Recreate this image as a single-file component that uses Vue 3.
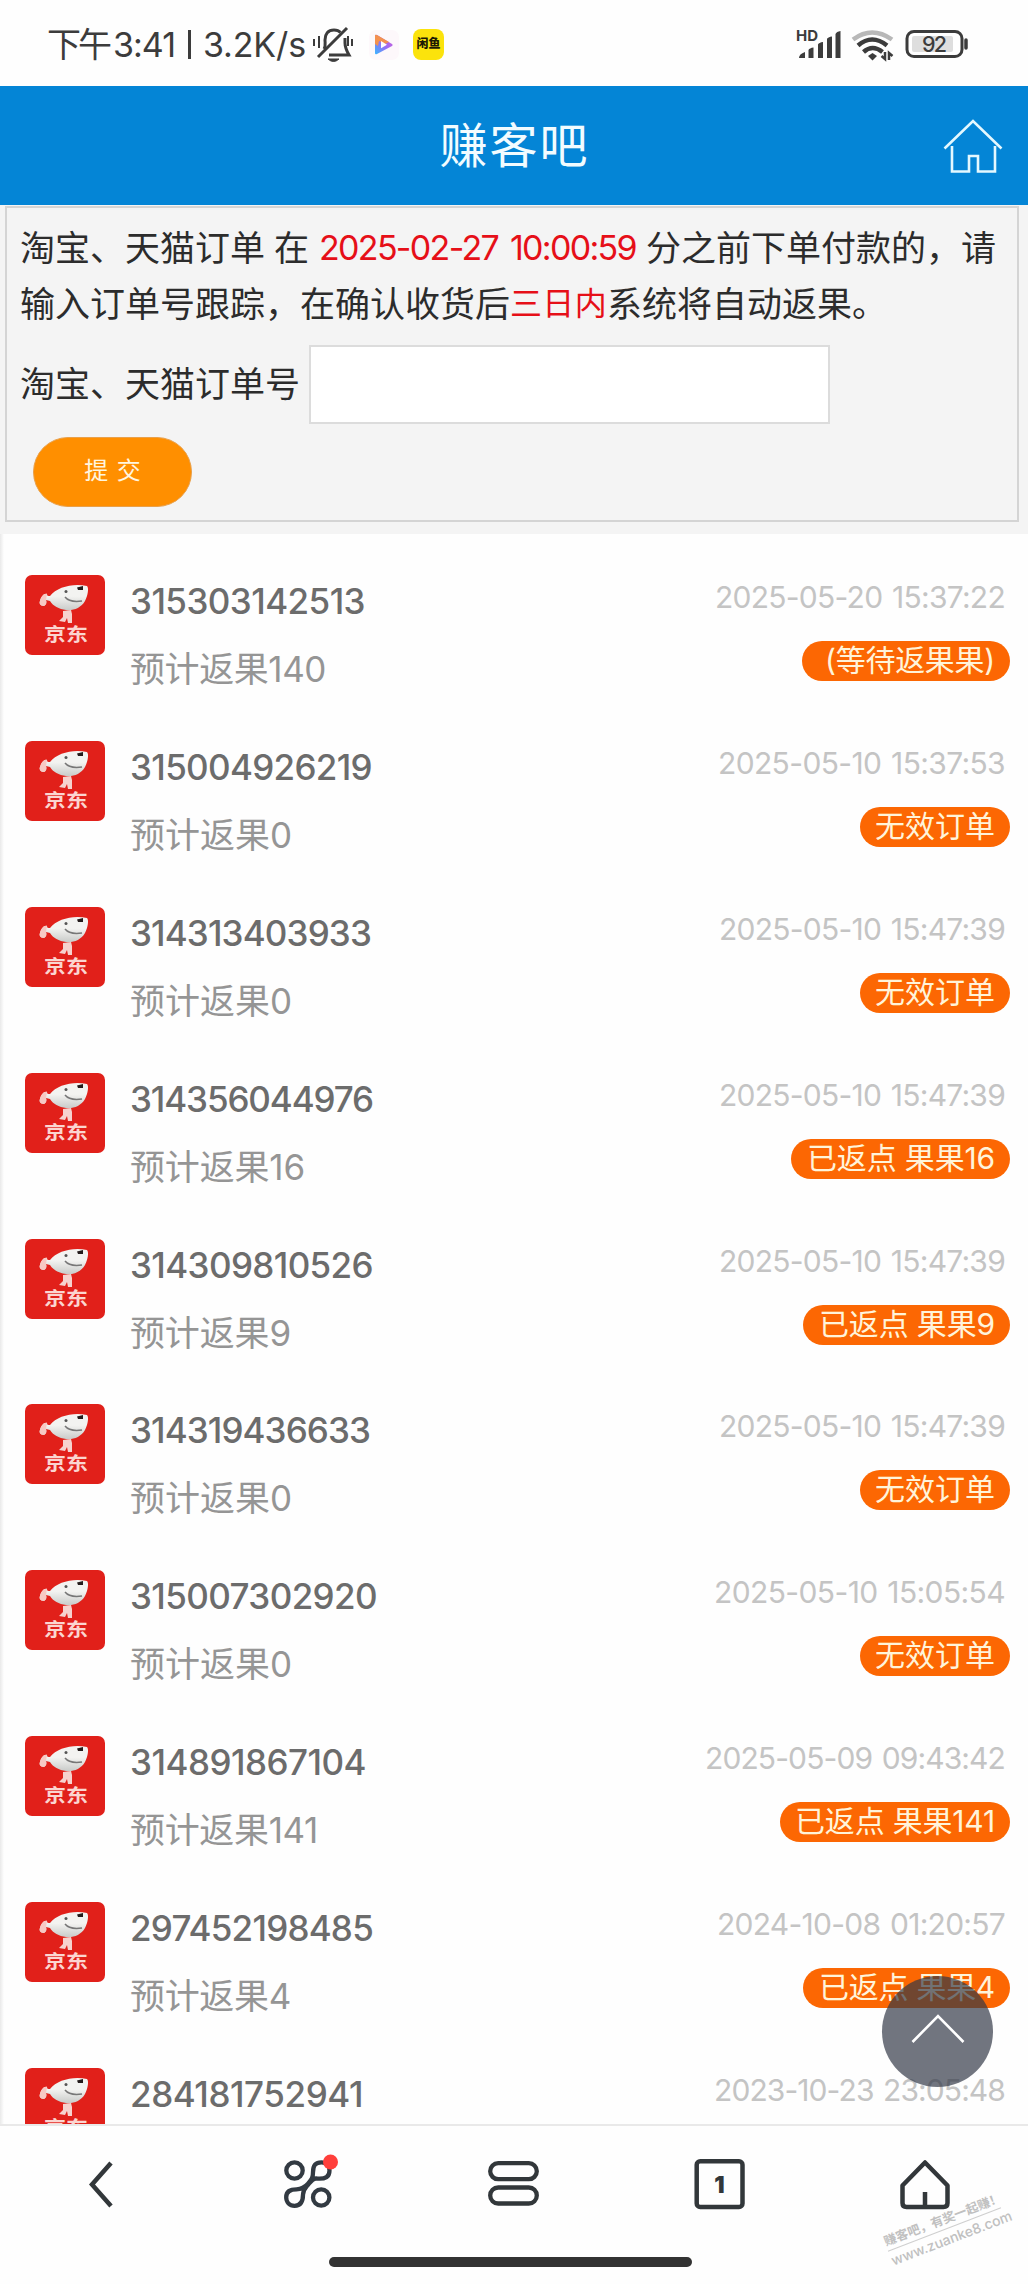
<script setup>
const orders = [
  { id: '315303142513', idW: 235, fruit: 140, fruitW: 196, time: '2025-05-20 15:37:22', timeW: 290, status: '(等待返果果)', badgeW: 208, textW: 170 },
  { id: '315004926219', idW: 242, fruit: 0, fruitW: 162, time: '2025-05-10 15:37:53', timeW: 287, status: '无效订单', badgeW: 150, textW: 120 },
  { id: '314313403933', idW: 241, fruit: 0, fruitW: 162, time: '2025-05-10 15:47:39', timeW: 286, status: '无效订单', badgeW: 150, textW: 120 },
  { id: '314356044976', idW: 243, fruit: 16, fruitW: 175, time: '2025-05-10 15:47:39', timeW: 286, status: '已返点 果果16', badgeW: 219, textW: 188 },
  { id: '314309810526', idW: 243, fruit: 9, fruitW: 161, time: '2025-05-10 15:47:39', timeW: 286, status: '已返点 果果9', badgeW: 207, textW: 176 },
  { id: '314319436633', idW: 240, fruit: 0, fruitW: 162, time: '2025-05-10 15:47:39', timeW: 286, status: '无效订单', badgeW: 150, textW: 120 },
  { id: '315007302920', idW: 247, fruit: 0, fruitW: 162, time: '2025-05-10 15:05:54', timeW: 291, status: '无效订单', badgeW: 150, textW: 120 },
  { id: '314891867104', idW: 236, fruit: 141, fruitW: 188, time: '2025-05-09 09:43:42', timeW: 300, status: '已返点 果果141', badgeW: 230, textW: 200 },
  { id: '297452198485', idW: 243, fruit: 4, fruitW: 161, time: '2024-10-08 01:20:57', timeW: 288, status: '已返点 果果4', badgeW: 207, textW: 176 },
  { id: '284181752941', idW: 233, time: '2023-10-23 23:05:48', timeW: 291 },
]

// Spreads the letters of an element so that its text fills the given width.
const vFit = {
  mounted(el, { value }) {
    const natural = el.getBoundingClientRect().width
    el.style.letterSpacing = `${(value - natural) / el.textContent.length}px`
  },
}
</script>

<template>
  <div class="page" lang="zh-CN">
    <div class="status">
      <div class="status-left">
        <span v-fit="62" class="fit">下午</span>
        <span v-fit="62" class="fit clock">3:41</span>
        <i class="bar"></i>
        <span v-fit="103" class="fit">3.2K/s</span>
        <svg class="bell" width="42" height="40" viewBox="0 0 42 40" fill="none" stroke="#3c3c3c" stroke-width="3">
          <path d="M6 32 35 3" />
          <path d="M12 24c2-3 1-6 1-9 0-6 3-10 9-10 2.500 0 5 .8 6.500 2.500M33 13v5q0 5 4 12H17" />
          <path d="M16 34q5.500 5 11 0z" fill="#3c3c3c" stroke-width="1" />
          <path d="M2 14v7M7 11v12M40 14v7M36 11v10" stroke-width="2" />
        </svg>
        <svg class="play" width="30" height="30" viewBox="0 0 30 30">
          <defs>
            <linearGradient id="playFill" x1="0" y1="1" x2="1" y2="0">
              <stop offset="0" stop-color="#38b6ff" />
              <stop offset=".5" stop-color="#9a6cf4" />
              <stop offset="1" stop-color="#e05ad0" />
            </linearGradient>
          </defs>
          <rect width="30" height="30" rx="7" fill="#fdf8fb" />
          <path d="M6 6q0-2 2-1l15 9q1.500 1 0 2L8 24q-2 1-2-1z" fill="url(#playFill)" />
          <path d="M6 6q0-2 2-1l12 7-4 2-6-3-1 5-3-2z" fill="#f4914f" />
          <path d="m12 11 6 3.700-6 3.600z" fill="#fff" />
        </svg>
        <span class="fish">闲鱼</span>
      </div>
      <svg class="status-right" width="174" height="40" viewBox="0 0 174 40">
        <text x="0" y="17" font-size="15" font-weight="700" fill="#3c3c3c" textLength="22">HD</text>
        <g fill="#3c3c3c">
          <path d="M3 34q0-4 6-6v6zM12.500 34v-8q1-2 5-2.500V34zM22 34V20.500q1-2 5-2.500v16zM31 34V15q1-2 5-2.500V34zM39.500 34V10q1-2.500 5-3v27z" />
        </g>
        <g fill="none" stroke-width="4.500">
          <path d="M57 15.500q19-14 39 0" stroke="#b8b8b8" />
          <path d="M62 21.500q14-12 29 0M67.500 28q9-8 19 0" stroke="#3c3c3c" />
        </g>
        <path d="m72 32 4.500-3 4.500 3-4.500 4.500z" fill="#3c3c3c" />
        <path d="M89 28v7l-3.500-3M93 36v-7l3.500 3" fill="none" stroke="#3c3c3c" stroke-width="2.500" />
        <rect x="111" y="7.500" width="55" height="25" rx="7" fill="#fff" stroke="#3c3c3c" stroke-width="3" />
        <rect x="116" y="12" width="41" height="16" rx="2" fill="#dedede" />
        <path d="M170 16v8" stroke="#3c3c3c" stroke-width="3.500" stroke-linecap="round" />
        <text x="126" y="28" font-size="21.500" font-weight="500" fill="#3c3c3c" textLength="25">92</text>
      </svg>
    </div>

    <header class="header">
      <h1 v-fit="150" class="fit">赚客吧</h1>
      <svg class="home" width="60" height="56" viewBox="0 0 60 56" fill="none" stroke="#e4f8ff" stroke-width="2.600">
        <path d="M1.500 30.500 30 3l28.500 27.500M9 28v25.500h17V38h9v15.500h17V28" />
      </svg>
    </header>

    <section class="notice">
      <form class="panel" @submit.prevent>
        <p class="line">
          <span v-fit="245" class="fit">淘宝、天猫订单</span>
          <span class="at">在</span>
          <span v-fit="317" class="fit red date">2025-02-27 10:00:59</span>
          <span v-fit="350" class="fit">分之前下单付款的，请</span>
        </p>
        <p class="line">
          <span v-fit="490" class="fit">输入订单号跟踪，在确认收货后</span>
          <span v-fit="97" class="fit red days">三日内</span>
          <span v-fit="280" class="fit">系统将自动返果。</span>
        </p>
        <label class="field">
          <span v-fit="280" class="fit label">淘宝、天猫订单号</span>
          <input type="text" />
        </label>
        <button class="submit" type="submit">提 交</button>
      </form>
    </section>

    <main class="list">
      <article v-for="o in orders" :key="o.id" class="order">
        <svg class="logo" width="80" height="80" viewBox="0 0 80 80">
          <defs>
            <linearGradient id="dogFill" x1="0" y1="0" x2="0" y2="1">
              <stop offset=".45" stop-color="#f3f3f1" />
              <stop offset="1" stop-color="#c9cbc9" />
            </linearGradient>
          </defs>
          <rect width="80" height="80" rx="7" fill="#e1201a" />
          <path d="M25 21C32 12 48 8 62 11c2 2 1 9-2 15-4 7-12 10-19 9-7-1-13-4-16-9l-4-1c1 3 0 5-2 6-4 0-5-3-4-5 1-4 4-8 7-7 0 2 1 2 3 2z" fill="url(#dogFill)" />
          <path d="M15 26c1-4 4-8 7-7l-1 6c1 3 0 5-2 6-4 0-5-3-4-5z" fill="#f7c9c4" />
          <path d="m52 12.500 6-1.500v4h-5z" fill="#241c1c" />
          <circle cx="41" cy="16.500" r="1.500" fill="#555" />
          <path d="M40 22c4 5 10 5 17 4" fill="none" stroke="#777" stroke-width="1.500" />
          <path d="m38 36 8-1 1 4v9h-4l-1-5-2 4-6-1 4-4z" fill="#f6d2ce" />
          <text transform="translate(19 66) scale(1 .85)" font-size="22" font-weight="700" fill="#fbd5d0" textLength="44">京东</text>
        </svg>
        <div class="info">
          <div class="id"><span v-fit="o.idW" class="fit">{{ o.id }}</span></div>
          <div v-if="o.fruitW" class="fruit"><span v-fit="o.fruitW" class="fit">预计返果{{ o.fruit }}</span></div>
        </div>
        <div class="meta">
          <time><span v-fit="o.timeW" class="fit">{{ o.time }}</span></time>
          <div v-if="o.status" class="badge" :style="{ width: o.badgeW + 'px' }"><span v-fit="o.textW" class="fit">{{ o.status }}</span></div>
        </div>
      </article>
      <button class="top" type="button" aria-label="top">
        <svg width="56" height="32" viewBox="0 0 56 32" fill="none" stroke="#fff" stroke-width="2.600">
          <path d="M2.500 29 28 3l25.500 26" />
        </svg>
      </button>
    </main>

    <nav class="nav">
      <div class="tabs">
        <a><svg width="56" height="56" viewBox="0 0 56 56" fill="none" stroke="#32373a" stroke-width="4">
          <path d="M36 7 17 28.500 36 50" stroke-width="4.500" />
        </svg></a>
        <a><svg width="56" height="56" viewBox="0 0 56 56" fill="none" stroke="#323a42" stroke-width="4.300">
          <circle cx="14.500" cy="14.500" r="8.200" />
          <circle cx="41.200" cy="41.500" r="8.200" />
          <path d="M36 22.500c10 1 13.500-2 13.500-8s-3.500-8.200-8-8.200c-6 0-8.500 3-8.500 10 0 5-1 7-5 11.500s-7 5.500-11.500 5.500c-6.500 0-10.300 2-10.300 8 0 5 3.500 8.500 8.300 8.500 6 0 8.500-4 8.500-11 0-5 2-6.500 5-10s5-6.300 8-6.300z" />
          <circle cx="50.500" cy="6" r="7.500" fill="#ff3f3b" stroke="none" />
        </svg></a>
        <a><svg width="56" height="56" viewBox="0 0 56 56" fill="none" stroke="#32373a" stroke-width="4.300">
          <rect x="4.200" y="7.200" width="46.600" height="16" rx="8" />
          <rect x="4.200" y="31.500" width="46.600" height="16" rx="8" />
        </svg></a>
        <a><svg width="56" height="56" viewBox="0 0 56 56" fill="none" stroke="#32373a" stroke-width="4.500">
          <rect x="4.700" y="5.200" width="45.800" height="45.800" rx="3.500" />
          <text x="27.500" y="36.500" font-size="23" font-weight="900" text-anchor="middle" fill="#32373a" stroke="none">1</text>
        </svg></a>
        <a><svg width="56" height="56" viewBox="0 0 56 56" fill="none" stroke="#32373a" stroke-width="4.500" stroke-linejoin="round">
          <path d="M28 6.500 5.500 29.500V47q0 4 4 4h37q4 0 4-4V29.500zM28 36v15" />
        </svg></a>
      </div>
      <div class="pill"></div>
      <div class="mark">
        <span>赚客吧，有奖一起赚！</span>
        <span class="url">www.zuanke8.com</span>
      </div>
    </nav>
  </div>
</template>

<style>
body {
  margin: 0;
}
</style>

<style scoped>
.page {
  position: relative;
  display: flex;
  flex-direction: column;
  width: 1028px;
  height: 2284px;
  overflow: hidden;
  background: #fefefe;
  color: #2c2c2c;
  font-family: Inter, "Noto Sans CJK SC", sans-serif;
}
.page * {
  box-sizing: border-box;
}
.fit {
  display: inline-block;
  white-space: nowrap;
  flex: none;
}
.status {
  display: flex;
  flex: none;
  justify-content: space-between;
  height: 86px;
  padding: 0 58px 0 47px;
  font-size: 34px;
  line-height: 90px;
  color: #3c3c3c;
}
.status-left {
  display: flex;
  align-items: center;
  height: 89px;
}
.clock {
  margin-left: 4px;
}
.bar {
  width: 3px;
  height: 29px;
  margin: 0 12px 0 13px;
  background: #3c3c3c;
}
.bell {
  margin-left: 6px;
}
.play {
  margin-left: 15px;
}
.fish {
  width: 31px;
  height: 31px;
  margin-left: 14px;
  border-radius: 8px;
  background: #fbe30c;
  color: #1c1a04;
  font-size: 12px;
  font-weight: 900;
  line-height: 30px;
  text-align: center;
  white-space: nowrap;
}
.status-right {
  margin-top: 24px;
}
.header {
  display: flex;
  flex: none;
  align-items: center;
  justify-content: center;
  height: 119px;
  padding: 0 25px 0 86px;
  background: #0485d6;
}
h1 {
  margin: 0 auto;
  color: #f2fcff;
  font-size: 48px;
  font-weight: 400;
  line-height: 119px;
}
.home {
  flex: none;
  width: 60px;
}
.notice {
  flex: none;
  height: 329px;
  padding: 1px 9px 12px 5px;
  background: #f4f4f4;
}
.panel {
  height: 316px;
  padding: 12px 0 0 13px;
  border: 2px solid #d4d4d4;
  font-size: 35px;
}
.line {
  display: flex;
  height: 56px;
  margin: 0;
  line-height: 56px;
}
.at {
  margin: 0 10px 0 9px;
}
.red {
  color: #e60f18;
}
.date {
  margin-right: 10px;
  font-size: 34px;
  word-spacing: 4px;
}
.days {
  font-size: 32px;
}
.field {
  display: flex;
  align-items: center;
  height: 79px;
  margin-top: 13px;
}
.label {
  padding-bottom: 7px;
}
input {
  width: 521px;
  height: 79px;
  margin-left: 9px;
  padding: 0;
  border: 2px solid #dcdcdc;
  background: #fff;
}
.submit {
  display: block;
  width: 159px;
  height: 70px;
  margin: 13px 0 0 13px;
  padding: 0 0 3px;
  border: 1px solid #e9a04a;
  border-radius: 35px;
  background: #ff8f00;
  color: #fff6e0;
  font-family: inherit;
  font-size: 24px;
  line-height: 64px;
  word-spacing: 2px;
}
.list {
  position: relative;
  flex: 1;
  min-height: 0;
  overflow: hidden;
  padding: 41px 18px 0 25px;
  background: linear-gradient(90deg, #e9e9e9, #fefefe 4px);
}
.order {
  display: flex;
  height: 165.900px;
}
.logo {
  flex: none;
}
.info {
  flex: 1;
  margin-left: 25px;
}
.id {
  height: 52px;
  color: #6c6c6c;
  font-size: 35px;
  font-weight: 500;
  line-height: 52px;
}
.fruit {
  height: 50px;
  margin-top: 17px;
  color: #959595;
  font-size: 35px;
  line-height: 50px;
}
.meta {
  display: flex;
  flex-direction: column;
  align-items: flex-end;
}
time {
  height: 44px;
  padding-right: 5px;
  color: #c4c4c4;
  font-size: 30px;
  line-height: 44px;
  word-spacing: 2px;
}
.badge {
  height: 40px;
  margin-top: 22px;
  padding-right: 15px;
  border-radius: 20px;
  background: #fc6703;
  color: #fff4da;
  font-size: 30px;
  line-height: 38px;
  text-align: right;
}
.top {
  position: absolute;
  right: 35px;
  bottom: 37px;
  display: flex;
  align-items: center;
  justify-content: center;
  width: 111px;
  height: 111px;
  padding: 0 0 6px;
  border: 0;
  border-radius: 50%;
  background: rgba(49, 55, 69, 0.69);
}
.nav {
  position: relative;
  flex: none;
  height: 160px;
  border-top: 2px solid #e9e9e9;
  background: #fefefe;
}
.tabs {
  display: flex;
  height: 116px;
}
.tabs a {
  display: flex;
  flex: 1;
  align-items: center;
  justify-content: center;
}
.tabs svg {
  overflow: visible;
}
.pill {
  width: 363px;
  height: 10px;
  margin: 15px 0 0 329px;
  border-radius: 5px;
  background: #333;
}
.mark {
  position: absolute;
  left: 884px;
  top: 84px;
  display: flex;
  flex-direction: column;
  width: 121px;
  color: #c0c0c0;
  font-size: 12.500px;
  font-weight: 700;
  line-height: 19px;
  text-align: center;
  white-space: nowrap;
  transform: rotate(-21deg);
}
.url {
  border-top: 1px solid #cfcfcf;
  font-size: 14px;
  font-weight: 500;
}
</style>
